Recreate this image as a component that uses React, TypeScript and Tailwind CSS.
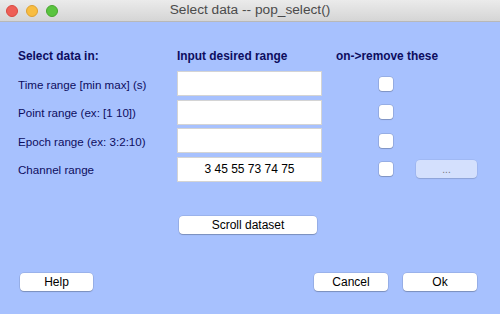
import React from "react";

const font = { fontFamily: '"Liberation Sans", Arial, sans-serif' };

function Btn({ label, w, extra = "" }: { label: string; w: string; extra?: string }) {
  return (
    <div
      className={`${w} h-[18px] rounded-[4px] bg-white flex items-center justify-center text-[12px] text-black shadow-[0_0_0_0.5px_rgba(0,0,0,0.15),0_1px_1px_rgba(0,0,0,0.2)] ${extra}`}
    >
      {label}
    </div>
  );
}

function Checkbox() {
  return (
    <div className="w-[14px] h-[14px] rounded-[3px] bg-white shadow-[0_0_0_0.5px_rgba(0,0,0,0.2),0_1px_1px_rgba(0,0,0,0.15)]" />
  );
}

export default function App() {
  const rows = [
    { label: "Time range [min max] (s)", value: "" },
    { label: "Point range (ex: [1 10])", value: "" },
    { label: "Epoch range (ex: 3:2:10)", value: "" },
    { label: "Channel range", value: "3 45 55 73 74 75" },
  ];
  return (
    <div className="w-[500px] h-[314px] overflow-hidden flex flex-col bg-[#a7c1fe]" style={font}>
      <div className="relative h-[22px] flex items-center justify-center bg-gradient-to-b from-[#ebebeb] to-[#d5d5d5] border-b border-[#b8b8b8]">
        <div className="absolute left-[6px] top-[5px] flex gap-[8px]">
          <div className="w-[12px] h-[12px] rounded-full bg-[#ee5f57] border border-[#d9493f]" />
          <div className="w-[12px] h-[12px] rounded-full bg-[#f8bd40] border border-[#dea131]" />
          <div className="w-[12px] h-[12px] rounded-full bg-[#5ac43f] border border-[#48a52f]" />
        </div>
        <span className="text-[13.7px] text-[#4b4b4b]">Select data -- pop_select()</span>
      </div>

      <div className="flex flex-col pl-[18px] pt-[27px]">
        <div className="flex items-center h-[16px] text-[11.9px] font-bold text-[#0d0d5e]">
          <div className="w-[159px]">Select data in:</div>
          <div className="w-[159px]">Input desired range</div>
          <div>on-&gt;remove these</div>
        </div>
        <div className="flex flex-col gap-[3.5px] mt-[6px]">
          {rows.map((r, i) => (
            <div key={i} className="flex items-center h-[25px]">
              <div className="w-[159px] text-[11.6px] text-[#0d0d5e] pt-[2px]">{r.label}</div>
              <div className="w-[145px] h-[25px] bg-white border border-[#d4d4d4] flex items-center justify-center text-[12px] text-black">
                {r.value}
              </div>
              <div className="ml-[57px]">
                <Checkbox />
              </div>
              {i === 3 && (
                <div className="ml-[23px] w-[61px] h-[18px] rounded-[4px] bg-[#d4e0fd] flex items-center justify-center text-[10px] text-[#777] shadow-[0_0_0_0.5px_rgba(0,0,0,0.08),0_1px_1px_rgba(0,0,0,0.12)]">
                  ...
                </div>
              )}
            </div>
          ))}
        </div>
        <div className="mt-[34px] ml-[161px]">
          <Btn label="Scroll dataset" w="w-[138px]" />
        </div>
        <div className="flex mt-[39px] ml-[2px]">
          <Btn label="Help" w="w-[73px]" />
          <Btn label="Cancel" w="w-[74px]" extra="ml-[221px]" />
          <Btn label="Ok" w="w-[74px]" extra="ml-[15px]" />
        </div>
      </div>
    </div>
  );
}
